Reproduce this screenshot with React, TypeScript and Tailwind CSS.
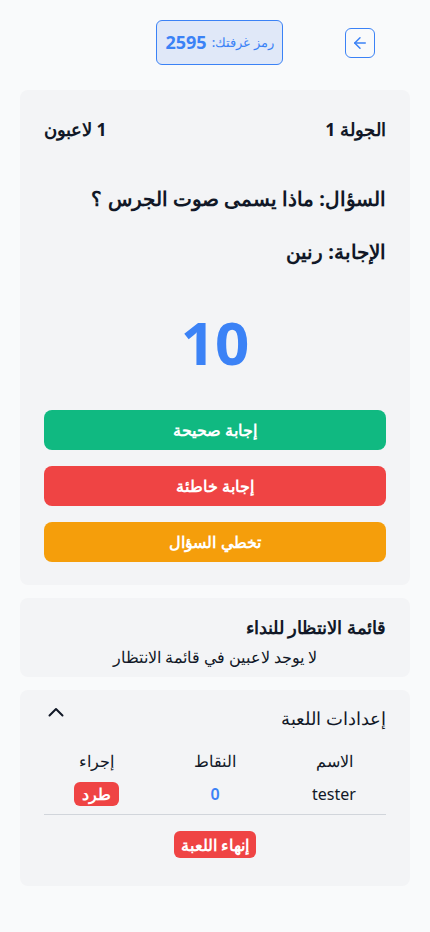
import React from "react";

export default function App() {
  return (
    <div
      dir="rtl"
      className="min-h-[932px] w-[430px] bg-[#f9fafb] text-[#111827] font-['Noto_Sans',sans-serif]"
    >
      <div className="flex items-center pr-[55px] pt-5 gap-[62px]">
        <button className="w-[30px] h-[30px] rounded-md border border-[#3b82f6] flex items-center justify-center text-[#3b82f6]">
          <svg width="18" height="18" viewBox="0 0 24 24" fill="none" stroke="currentColor" strokeWidth="2" strokeLinecap="round" strokeLinejoin="round">
            <path d="M19 12H5" />
            <path d="M12 19l-7-7 7-7" />
          </svg>
        </button>
        <div className="h-[45px] w-[127px] rounded-md border border-[#3b82f6] bg-[#e0e8f8] flex items-center justify-center gap-[5px] text-[#3b82f6]">
          <span className="text-[13px] font-medium">رمز غرفتك:</span>
          <span className="text-[18px] font-bold">2595</span>
        </div>
      </div>

      <div className="mx-5 mt-[25px] rounded-lg bg-[#f3f4f6] px-6 pt-[26px] pb-[23px]">
        <div className="flex justify-between items-center text-[17.6px] leading-[26px] font-bold">
          <span>الجولة 1</span>
          <span>1 لاعبون</span>
        </div>
        <div className="mt-[43px] text-[20px] leading-[28px] font-bold">السؤال: ماذا يسمى صوت الجرس ؟</div>
        <div className="mt-[25px] text-[20px] leading-[28px] font-bold">الإجابة: رنين</div>
        <div className="mt-[46px] text-center text-[60px] leading-[60px] font-bold text-[#3b82f6]">10</div>
        <div className="mt-[38px] flex flex-col gap-4">
          <button className="h-10 rounded-lg bg-[#10b981] text-white font-semibold text-[16px]">إجابة صحيحة</button>
          <button className="h-10 rounded-lg bg-[#ef4444] text-white font-semibold text-[16px]">إجابة خاطئة</button>
          <button className="h-10 rounded-lg bg-[#f59e0b] text-white font-semibold text-[16px]">تخطي السؤال</button>
        </div>
      </div>

      <div className="mx-5 mt-[13px] rounded-lg bg-[#f3f4f6] px-6 pt-[15px] pb-[8px]">
        <div className="text-[18px] leading-[28px] font-semibold">قائمة الانتظار للنداء</div>
        <div className="mt-[4px] text-center text-[16px] leading-[24px]">لا يوجد لاعبين في قائمة الانتظار</div>
      </div>

      <div className="mx-5 mt-[13px] rounded-lg bg-[#f3f4f6] px-6 pt-[14px] pb-[28px]">
        <div className="flex justify-between items-center">
          <span className="text-[18px] leading-[28px] font-medium">إعدادات اللعبة</span>
          <svg width="16" height="10" viewBox="0 0 16 10" fill="none" stroke="currentColor" strokeWidth="2" strokeLinecap="round" strokeLinejoin="round" className="ml-1 mb-3">
            <path d="M1.5 8.5L8 2l6.5 6.5" />
          </svg>
        </div>
        <table className="mt-[17px] w-full table-fixed text-[16px]">
          <thead>
            <tr>
              <th className="w-[104px] font-medium leading-[24px] pb-[8px]">الاسم</th>
              <th className="w-[134px] font-medium leading-[24px] pb-[8px]">النقاط</th>
              <th className="w-[104px] font-medium leading-[24px] pb-[8px]">إجراء</th>
            </tr>
          </thead>
          <tbody>
            <tr className="border-b border-[#d1d5db]">
              <td className="text-center pt-[1px] pb-[8px]">tester</td>
              <td className="text-center font-semibold text-[#3b82f6] pt-[1px] pb-[8px]">0</td>
              <td className="text-center pt-[1px] pb-[8px]">
                <span className="inline-flex h-6 items-center rounded-md bg-[#ef4444] text-white px-2 text-[16px] font-semibold">طرد</span>
              </td>
            </tr>
          </tbody>
        </table>
        <div className="mt-[16px] flex justify-center">
          <span className="inline-flex h-[27px] items-center rounded-md bg-[#ef4444] text-white px-[7px] text-[16px] font-semibold">إنهاء اللعبة</span>
        </div>
      </div>
    </div>
  );
}
